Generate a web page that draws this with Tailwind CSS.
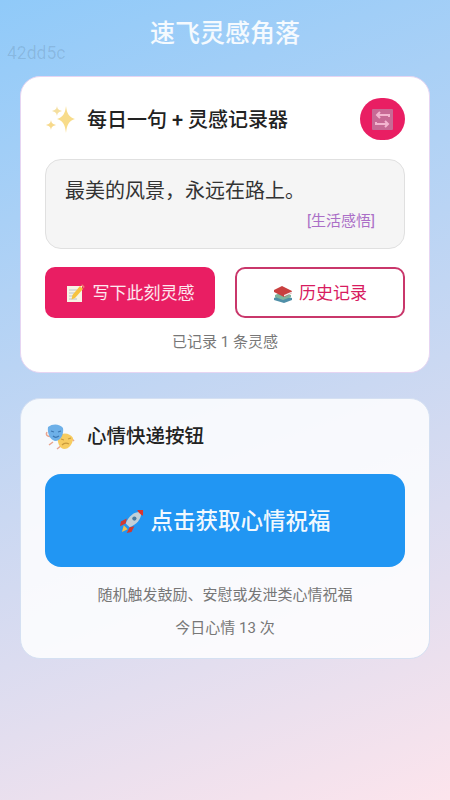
<!DOCTYPE html>
<html lang="zh-CN">
<head>
    <meta charset="UTF-8">
    <meta name="viewport" content="width=device-width, initial-scale=1.0">
    <title>速飞灵感角落</title>
    <script src="https://cdn.jsdelivr.net/npm/@tailwindcss/browser@4"></script>
</head>
<body class="relative h-[800px] w-[450px] overflow-hidden bg-[linear-gradient(160deg,#90caf9_0%,#fce4ec_100%)] font-['Roboto','Noto_Sans_CJK_SC',sans-serif]">
    <span class="absolute left-[7px] top-[44px] text-[17.500px] leading-[18px] text-black/10">42dd5c</span>

    <main class="flex flex-col px-5">
        <h1 class="h-[76px] pt-[18px] text-center text-[25px] leading-8 font-medium text-white/90">速飞灵感角落</h1>

        <!-- 每日一句 -->
        <section class="h-[297px] rounded-[20px] border border-[#e6d5f2] bg-white px-6 pt-[21px]">
            <div class="flex h-[42px] items-center justify-between">
                <div class="flex items-center gap-3">
                    <svg class="h-[30px] w-[30px]" viewBox="0 0 30 30">
                        <path fill="#f8dc8a" d="M21 2 C22 10 24 13 30 15 C24 17 22 20 21 29 C20 20 18 17 12 15 C18 13 20 10 21 2Z"/>
                        <path fill="#f5df9f" d="M12 2 C12.500 5 13.500 6 17 7 C13.500 8 12.500 9 12 12 C11.500 9 10.500 8 7 7 C10.500 6 11.500 5 12 2Z"/>
                        <path fill="#f7d98b" d="M6 16 C6.500 19 7.500 20 11 21 C7.500 22 6.500 23 6 26 C5.500 23 4.500 22 1 21 C4.500 20 5.500 19 6 16Z"/>
                    </svg>
                    <h2 class="translate-y-px text-xl leading-7 font-medium text-[#222]">每日一句 + 灵感记录器</h2>
                </div>
                <button class="flex h-[42px] w-[45px] items-center justify-center rounded-full bg-[#e91e63]">
                    <svg class="h-[21px] w-[21px]" viewBox="0 0 21 21">
                        <rect width="21" height="21" rx="1" fill="#c76a95"/>
                        <path fill="none" stroke="#f3b5cf" stroke-width="2" d="M17 8 V6 H5 M8 3 L5 6 L8 9 M4 13 V15 H16 M13 12 L16 15 L13 18"/>
                    </svg>
                </button>
            </div>

            <div class="mt-[19px] h-[90px] rounded-2xl border border-[#e0e0e0] bg-[#f5f5f5] pt-[17px] pr-[29px] pl-[19px]">
                <p class="text-xl leading-7 text-[#333]">最美的风景，永远在路上。</p>
                <p class="mt-[6px] text-right text-[15px] leading-5 text-[#ab6fc7]">[生活感悟]</p>
            </div>

            <div class="mt-[18px] grid grid-cols-2 gap-5">
                <button class="flex h-[51px] items-center justify-center gap-2 rounded-[10px] bg-[#e91e63] pt-[2px] text-[17px] text-white/90">
                    <svg class="h-[19px] w-[19px]" viewBox="0 0 19 19">
                        <rect x="1" y="2" width="15" height="16" fill="#f7f3e4"/>
                        <path stroke="#b9c4cc" stroke-width="1" d="M3 6 H11 M3 9 H9 M3 12 H8 M3 15 H11"/>
                        <path fill="#f6c33e" d="M14 2 L17 5 L9 14 L5.500 15.500 L6.500 11Z"/>
                        <path fill="#ef7f6c" d="M15 1 L16.500 0.500 L18.500 2.500 L18 4.500Z"/>
                    </svg>
                    写下此刻灵感
                </button>
                <button class="flex h-[51px] items-center justify-center gap-[6px] rounded-[10px] border-2 border-[#c9376b] bg-white pt-[2px] text-[17px] text-[#d81b60]">
                    <svg class="h-5 w-5" viewBox="0 0 20 20">
                        <path fill="#4f8fa8" d="M1 14 L8 11 L19 14 V16 L11 19 L1 16Z"/>
                        <path fill="#7fb59c" d="M2 11 L9 8 L18 11 V13 L10 16 L2 13Z"/>
                        <path fill="#c9403f" d="M1 6 L9 2 L19 7 V9 L11 13 L1 8Z"/>
                        <path fill="#eeeeee" d="M11 11 L19 7.500 V9 L11 12.500Z"/>
                    </svg>
                    历史记录
                </button>
            </div>

            <p class="mt-[14px] text-center text-[15px] leading-5 text-[#777]">已记录 1 条灵感</p>
        </section>

        <!-- 心情快递 -->
        <section class="mt-[25px] h-[261px] rounded-[20px] border border-[#d5e0f2] bg-white/85 px-6 pt-[21px]">
            <div class="flex h-[34px] items-center gap-3">
                <svg class="h-[30px] w-[30px]" viewBox="0 0 30 30">
                    <path fill="none" stroke="#e9a58f" stroke-width="1.500" d="M2 10 C0 14 4 15 7 14 M8 20 L4 23 M17 23 L12 27 M26 16 L29 19"/>
                    <path fill="#f7cc60" d="M13 14 C18 10 25 11 28 16 C28 22 24 27 19 27 C14 26 12 20 13 14Z"/>
                    <path fill="none" stroke="#c99a3c" stroke-width="1.200" d="M17 23 C19 21 22 21 24 22 M16 17 L19 18 M23 17 L26 16"/>
                    <path fill="#6db0e8" d="M3 5 C8 1 15 2 18 6 C19 12 16 19 10 19 C5 18 2 11 3 5Z"/>
                    <path fill="none" stroke="#3d78b3" stroke-width="1.200" d="M6 9 L9 10 M13 10 L16 9 M8 14 C10 16 12 15.500 14 14"/>
                </svg>
                <h2 class="text-[19.500px] leading-7 font-medium text-[#222]">心情快递按钮</h2>
            </div>

            <button class="mt-5 flex h-[93px] w-full items-center justify-center gap-[6px] rounded-2xl bg-[#2196f3] pt-[2px] text-[22.500px] font-medium text-white/95">
                <svg class="h-[25px] w-[25px]" viewBox="0 0 26 26">
                    <path fill="#d23a30" d="M8 10 L2 13 L1 18 L7 15Z M16 18 L13 24 L8 25 L11 19Z"/>
                    <path fill="#f3c04d" d="M5 17 L9 21 L3 24Z"/>
                    <path fill="#c3d0d8" d="M7 15 C10 7 16 3 21 3 L23 5 C23 10 19 16 11 19Z"/>
                    <path fill="#d9362f" d="M19 1 L25 1 L25 7 L23 6 L20 3Z"/>
                    <circle cx="16" cy="10" r="2.200" fill="#4b7a9e"/>
                </svg>
                点击获取心情祝福
            </button>

            <p class="mt-[18px] text-center text-[15px] leading-5 text-[#777]">随机触发鼓励、安慰或发泄类心情祝福</p>
            <p class="mt-[13px] text-center text-[15px] leading-5 text-[#777]">今日心情 13 次</p>
        </section>
    </main>
</body>
</html>
